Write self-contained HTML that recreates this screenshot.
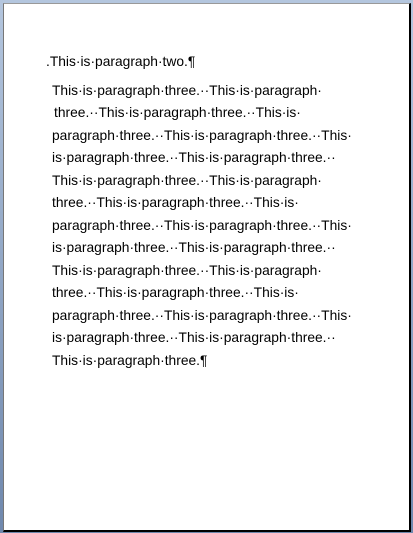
<!DOCTYPE html><html><head><style>
body{margin:0;width:413px;height:533px;background:linear-gradient(#b4c6de,#6f88ad);position:relative;overflow:hidden}
.pg{position:absolute;left:3px;top:3px;width:405px;height:526px;background:#fff;border-left:1px solid #777;border-top:1px solid #999;border-right:2px solid #000;border-bottom:2px solid #000}
.l{position:absolute;font-family:"Liberation Sans",sans-serif;font-size:13.8px;white-space:pre;color:#000;line-height:16px}
</style></head><body><div class="pg"></div>
<div class="l" style="left:46px;top:54px">.This·is·paragraph·two.¶</div>
<div class="l" style="left:52px;top:83px">This·is·paragraph·three.··This·is·paragraph·</div>
<div class="l" style="left:54px;top:105px">three.··This·is·paragraph·three.··This·is·</div>
<div class="l" style="left:52px;top:128px">paragraph·three.··This·is·paragraph·three.··This·</div>
<div class="l" style="left:52px;top:150px">is·paragraph·three.··This·is·paragraph·three.··</div>
<div class="l" style="left:52px;top:173px">This·is·paragraph·three.··This·is·paragraph·</div>
<div class="l" style="left:52px;top:195px">three.··This·is·paragraph·three.··This·is·</div>
<div class="l" style="left:52px;top:218px">paragraph·three.··This·is·paragraph·three.··This·</div>
<div class="l" style="left:52px;top:240px">is·paragraph·three.··This·is·paragraph·three.··</div>
<div class="l" style="left:52px;top:263px">This·is·paragraph·three.··This·is·paragraph·</div>
<div class="l" style="left:52px;top:285px">three.··This·is·paragraph·three.··This·is·</div>
<div class="l" style="left:52px;top:308px">paragraph·three.··This·is·paragraph·three.··This·</div>
<div class="l" style="left:52px;top:330px">is·paragraph·three.··This·is·paragraph·three.··</div>
<div class="l" style="left:52px;top:353px">This·is·paragraph·three.¶</div>
</body></html>
